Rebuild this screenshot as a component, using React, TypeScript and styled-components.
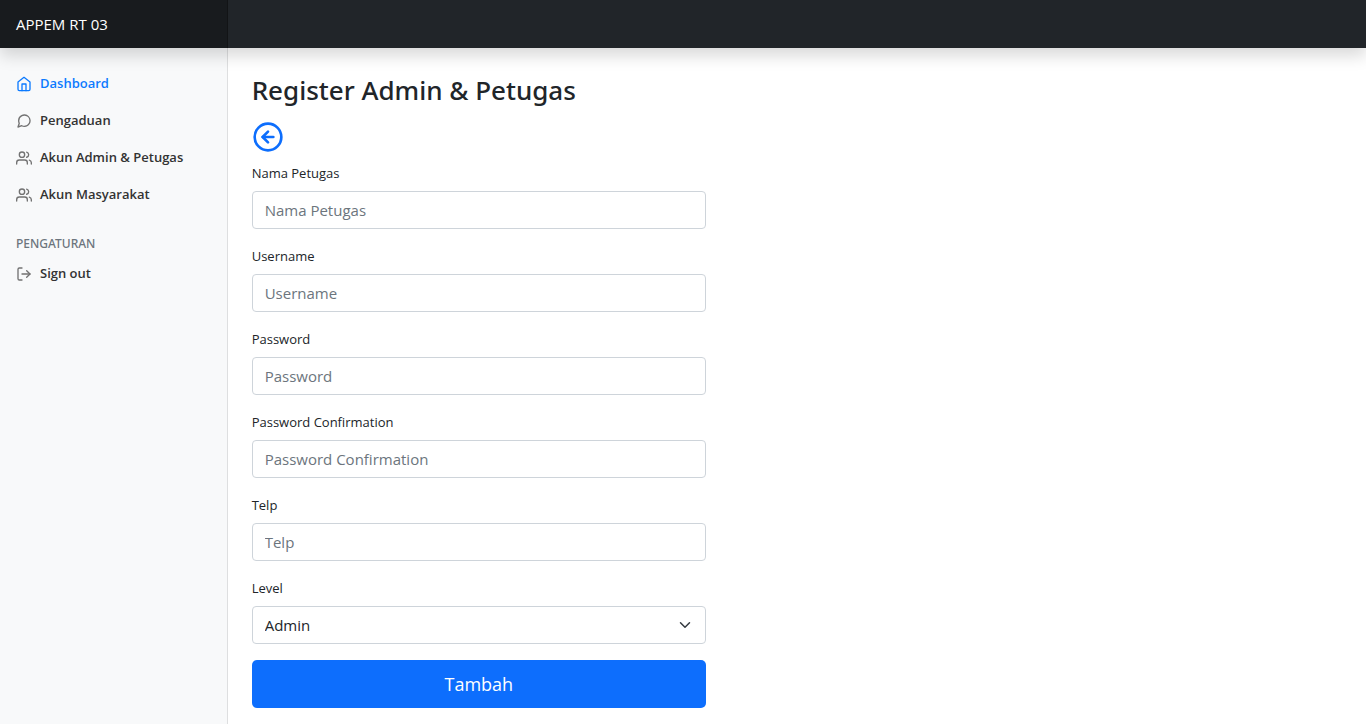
import React, { useId } from "react";
import styled, { createGlobalStyle } from "styled-components";

const GlobalStyle = createGlobalStyle`
  *, *::before, *::after { box-sizing: border-box; }
  body {
    margin: 0;
    background: #fff;
    color: #212529;
    font-family: "Segoe UI", "Open Sans", "Noto Sans", sans-serif;
    font-size: 13px;
    line-height: 21px;
  }
`;

const Page = styled.div`
  min-height: 100vh;
  display: flex;
  flex-direction: column;
`;

const Header = styled.header`
  position: sticky;
  top: 0;
  z-index: 2;
  display: flex;
  height: 48px;
  background: #212529;
  box-shadow: 0 8px 16px rgba(0, 0, 0, 0.15);
`;

const Brand = styled.a`
  width: calc(100% / 6);
  padding: 12px 16px;
  background: rgba(0, 0, 0, 0.25);
  box-shadow: inset -1px 0 0 rgba(0, 0, 0, 0.25);
  color: #fff;
  font-size: 15px;
  line-height: 24px;
  text-decoration: none;
`;

const Body = styled.div`
  flex: 1;
  display: flex;
`;

const Sidebar = styled.nav`
  flex: none;
  width: calc(100% / 6);
  padding-top: 17px;
  background: #f8f9fa;
  box-shadow: inset -1px 0 0 rgba(0, 0, 0, 0.1);
`;

const NavList = styled.ul`
  margin: 0;
  padding: 0;
  list-style: none;
`;

const NavLink = styled.a<{ $active?: boolean }>`
  display: flex;
  align-items: center;
  gap: 8px;
  padding: 8px 16px;
  color: ${(p) => (p.$active ? "#0d7bff" : "#333")};
  font-weight: 600;
  text-decoration: none;

  svg { color: ${(p) => (p.$active ? "inherit" : "#727272")}; }
`;

const NavHeading = styled.h6`
  margin: 23px 0 4px;
  padding: 0 16px;
  color: #6c757d;
  font-family: "Segoe UI", "Noto Sans", sans-serif;
  font-size: 12px;
  line-height: 15px;
  font-weight: 500;
  text-transform: uppercase;
`;

const Main = styled.main`
  flex: 1;
  min-width: 0;
  padding: 24px 24px 16px;
`;

const Title = styled.h2`
  margin: 0 0 13px;
  font-family: "Segoe UI", "Noto Sans", sans-serif;
  font-size: 26px;
  line-height: 36px;
  font-weight: 500;
`;

const BackLink = styled.a`
  display: flex;
  width: fit-content;
  color: #0d6efd;
`;

const Form = styled.form`
  width: calc(100% * 5 / 12);
  margin-top: 9px;
`;

const Field = styled.div`
  display: flex;
  flex-direction: column;
  gap: 6px;
  margin-bottom: 16px;
`;

const Label = styled.label`
  line-height: 23px;
`;

const control = `
  width: 100%;
  height: 38px;
  padding: 6px 12px;
  border: 1px solid #ced4da;
  border-radius: 4px;
  background-color: #fff;
  color: #212529;
  font-family: inherit;
  font-size: 15px;
  line-height: 24px;
`;

const Input = styled.input`
  ${control}
  &::placeholder { color: #6c757d; opacity: 1; }
`;

const SelectWrap = styled.div`
  display: grid;
  align-items: center;

  > * { grid-area: 1 / 1; }
  > svg { justify-self: end; margin-right: 13px; pointer-events: none; }
`;

const Select = styled.select`
  ${control}
  appearance: none;
`;

const Submit = styled.button`
  display: block;
  width: 100%;
  height: 48px;
  border: 0;
  border-radius: 5px;
  background: #0d6efd;
  color: #fff;
  font-family: inherit;
  font-size: 18px;
  line-height: 30px;
`;

const Icon = ({ size = 16, children }: { size?: number; children: React.ReactNode }) => (
  <svg
    width={size}
    height={size}
    viewBox="0 0 24 24"
    fill="none"
    stroke="currentColor"
    strokeWidth="2"
    strokeLinecap="round"
    strokeLinejoin="round"
    aria-hidden="true"
  >
    {children}
  </svg>
);

const HomeIcon = () => (
  <Icon>
    <path d="M3 9l9-7 9 7v11a2 2 0 0 1-2 2H5a2 2 0 0 1-2-2z" />
    <polyline points="9 22 9 12 15 12 15 22" />
  </Icon>
);

const MessageIcon = () => (
  <Icon>
    <path d="M21 11.5a8.38 8.38 0 0 1-.9 3.8 8.5 8.5 0 0 1-7.6 4.7 8.38 8.38 0 0 1-3.8-.9L3 21l1.9-5.7a8.38 8.38 0 0 1-.9-3.8 8.5 8.5 0 0 1 4.7-7.6 8.38 8.38 0 0 1 3.8-.9h.5a8.48 8.48 0 0 1 8 8v.5z" />
  </Icon>
);

const UsersIcon = () => (
  <Icon>
    <path d="M17 21v-2a4 4 0 0 0-4-4H5a4 4 0 0 0-4 4v2" />
    <circle cx="9" cy="7" r="4" />
    <path d="M23 21v-2a4 4 0 0 0-3-3.87" />
    <path d="M16 3.13a4 4 0 0 1 0 7.75" />
  </Icon>
);

const LogOutIcon = () => (
  <Icon>
    <path d="M9 21H5a2 2 0 0 1-2-2V5a2 2 0 0 1 2-2h4" />
    <polyline points="16 17 21 12 16 7" />
    <line x1="21" y1="12" x2="9" y2="12" />
  </Icon>
);

const BackIcon = () => (
  <Icon size={32}>
    <circle cx="12" cy="12" r="10" />
    <polyline points="12 8 8 12 12 16" />
    <line x1="16" y1="12" x2="8" y2="12" />
  </Icon>
);

const ChevronIcon = () => (
  <svg width="16" height="12" viewBox="0 0 16 16" fill="none" stroke="#343a40" strokeWidth="2" strokeLinecap="round" strokeLinejoin="round" aria-hidden="true">
    <path d="M2 5l6 6 6-6" />
  </svg>
);

const navItems = [
  { label: "Dashboard", icon: <HomeIcon />, active: true },
  { label: "Pengaduan", icon: <MessageIcon /> },
  { label: "Akun Admin & Petugas", icon: <UsersIcon /> },
  { label: "Akun Masyarakat", icon: <UsersIcon /> },
];

const TextField = ({ label, type = "text" }: { label: string; type?: string }) => {
  const id = useId();
  return (
    <Field>
      <Label htmlFor={id}>{label}</Label>
      <Input id={id} type={type} placeholder={label} />
    </Field>
  );
};

export default function App() {
  return (
    <Page>
      <GlobalStyle />
      <Header>
        <Brand href="#">APPEM RT 03</Brand>
      </Header>
      <Body>
        <Sidebar>
          <NavList>
            {navItems.map((item) => (
              <li key={item.label}>
                <NavLink href="#" $active={item.active}>
                  {item.icon}
                  {item.label}
                </NavLink>
              </li>
            ))}
          </NavList>
          <NavHeading>Pengaturan</NavHeading>
          <NavList>
            <li>
              <NavLink href="#">
                <LogOutIcon />
                Sign out
              </NavLink>
            </li>
          </NavList>
        </Sidebar>
        <Main>
          <Title>Register Admin &amp; Petugas</Title>
          <BackLink href="#" aria-label="Kembali">
            <BackIcon />
          </BackLink>
          <Form onSubmit={(e) => e.preventDefault()}>
            <TextField label="Nama Petugas" />
            <TextField label="Username" />
            <TextField label="Password" type="password" />
            <TextField label="Password Confirmation" type="password" />
            <TextField label="Telp" type="tel" />
            <Field>
              <Label htmlFor="level">Level</Label>
              <SelectWrap>
                <Select id="level" defaultValue="admin">
                  <option value="admin">Admin</option>
                  <option value="petugas">Petugas</option>
                </Select>
                <ChevronIcon />
              </SelectWrap>
            </Field>
            <Submit type="submit">Tambah</Submit>
          </Form>
        </Main>
      </Body>
    </Page>
  );
}
